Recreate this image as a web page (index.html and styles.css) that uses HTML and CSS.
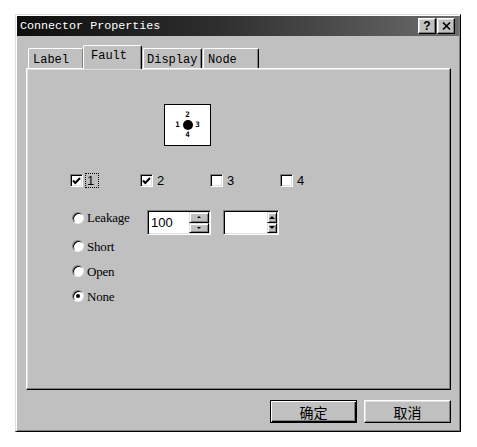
FILE: index.html
```html
<!DOCTYPE html>
<html>
<head>
<meta charset="utf-8">
<title>Connector Properties</title>
<link rel="stylesheet" href="styles.css">
</head>
<body>
<div class="window">
  <div class="titlebar">
    <span class="title">Connector Properties</span>
    <div class="tbtns">
      <span class="tbtn help">?</span>
      <span class="tbtn close"><svg width="9" height="8" viewBox="0 0 9 8"><path d="M1 0.5 L8 7.5 M8 0.5 L1 7.5" stroke="#000" stroke-width="1.6" fill="none"/></svg></span>
    </div>
  </div>
  <div class="body">
    <div class="tabs">
      <div class="tab t-label">Label</div>
      <div class="tab sel t-fault">Fault</div>
      <div class="tab t-display">Display</div>
      <div class="tab t-node">Node</div>
    </div>
    <div class="panel">
      <div class="diagram">
        <span></span><span class="n">2</span><span></span>
        <span class="n">1</span><span class="dot"></span><span class="n">3</span>
        <span></span><span class="n">4</span><span></span>
      </div>
      <div class="checks">
        <div class="chk"><span class="box"><svg width="9" height="8" viewBox="0 0 9 8"><path d="M1 3.5 L3.3 6 L8 1" stroke="#000" stroke-width="2" fill="none"/></svg></span><span class="clabel focus">1</span></div>
        <div class="chk"><span class="box"><svg width="9" height="8" viewBox="0 0 9 8"><path d="M1 3.5 L3.3 6 L8 1" stroke="#000" stroke-width="2" fill="none"/></svg></span><span class="clabel">2</span></div>
        <div class="chk"><span class="box"></span><span class="clabel">3</span></div>
        <div class="chk"><span class="box"></span><span class="clabel">4</span></div>
      </div>
      <div class="radios">
        <div class="rrow first">
          <span class="radio"></span><span class="rlabel wide">Leakage</span>
          <div class="spin s1">
            <span class="val">100</span>
            <div class="sbtns">
              <span class="sbtn"><i class="up"></i></span>
              <span class="sbtn"><i class="down"></i></span>
            </div>
          </div>
          <div class="spin s2">
            <span class="val"></span>
            <div class="sbtns">
              <span class="sbtn"><i class="up"></i></span>
              <span class="sbtn"><i class="down"></i></span>
            </div>
          </div>
        </div>
        <div class="rrow"><span class="radio"></span><span class="rlabel">Short</span></div>
        <div class="rrow"><span class="radio"></span><span class="rlabel">Open</span></div>
        <div class="rrow"><span class="radio on"></span><span class="rlabel">None</span></div>
      </div>
    </div>
    <div class="buttons">
      <div class="btn default">确定</div>
      <div class="btn">取消</div>
    </div>
  </div>
</div>
</body>
</html>
```

FILE: styles.css
```css
body {
  margin: 0;
  background: #fff;
}

.window {
  margin: 14px 0 0 15px;
  width: 446px;
  height: 418px;
  box-sizing: border-box;
  background: #c0c0c0;
  border: 1px solid;
  border-color: #dfdfdf #000 #000 #dfdfdf;
  box-shadow: inset 1px 1px #fff, inset -1px -1px #808080;
  padding: 1px;
  display: flex;
  flex-direction: column;
}

.titlebar {
  height: 20px;
  flex: none;
  background: linear-gradient(to right, #0e0e0e 0%, #2e2e2e 45%, #6c6c6c 100%);
  display: flex;
  align-items: center;
  justify-content: space-between;
  padding: 0 4px 0 3px;
}

.title {
  color: #fff;
  font-family: "Liberation Mono", monospace;
  font-size: 11.7px;
  line-height: 14px;
}

.tbtns {
  display: flex;
  gap: 1px;
}

.tbtn {
  width: 18px;
  height: 16px;
  box-sizing: border-box;
  background: #c0c0c0;
  border: 1px solid;
  border-color: #fff #000 #000 #fff;
  box-shadow: inset -1px -1px #808080, inset 1px 1px #dfdfdf;
  display: flex;
  align-items: center;
  justify-content: center;
  font-family: "Liberation Sans", sans-serif;
  font-weight: bold;
  font-size: 12px;
  line-height: 12px;
  color: #000;
}

.body {
  flex: 1;
  display: flex;
  flex-direction: column;
  padding: 9px 8px 7px 9px;
}

.tabs {
  display: flex;
  align-items: flex-end;
  height: 24px;
  margin-bottom: -1px;
  position: relative;
  z-index: 1;
  flex: none;
}

.tab {
  box-sizing: border-box;
  height: 20px;
  margin-bottom: 1px;
  background: #c0c0c0;
  border-top: 1px solid #fff;
  border-left: 1px solid #fff;
  border-right: 1px solid #000;
  border-top-left-radius: 2px;
  border-top-right-radius: 2px;
  box-shadow: inset -1px 0 #808080;
  font-family: "Liberation Mono", monospace;
  font-size: 12px;
  line-height: 16px;
  padding: 3px 0 0 4px;
  color: #000;
}

.t-label { margin-left: 2px; width: 55px; border-right-color: #808080; box-shadow: none; }
.t-fault { width: 59px; }
.t-display { margin-left: 1px; width: 59px; padding-left: 3px; }
.t-node { margin-left: 1px; width: 56px; }

.tab.sel {
  height: 24px;
  margin-bottom: 0;
  padding: 2px 0 0 7px;
}

.panel {
  flex: none;
  height: 322px;
  box-sizing: border-box;
  border: 1px solid;
  border-color: #fff #000 #000 #fff;
  box-shadow: inset -1px -1px #808080, inset 1px 1px #dfdfdf;
  display: flex;
  flex-direction: column;
  align-items: flex-start;
}

.diagram {
  margin: 35px 0 0 137px;
  width: 47px;
  height: 42px;
  box-sizing: border-box;
  border: 1px solid #000;
  background: #fff;
  display: grid;
  grid-template-columns: 6px 10px 6px;
  grid-template-rows: 8px 10px 8px;
  column-gap: 2px;
  row-gap: 1px;
  justify-content: center;
  align-content: center;
  justify-items: center;
  align-items: center;
  font-family: "DejaVu Sans Mono", monospace;
  font-weight: bold;
  font-size: 7.5px;
  line-height: 8px;
  color: #000;
}

.dot {
  width: 10px;
  height: 10px;
  border-radius: 50%;
  background: #000;
}

.checks {
  display: flex;
  margin: 27px 0 0 43px;
}

.chk {
  width: 70px;
  display: flex;
  align-items: center;
}

.box {
  width: 13px;
  height: 13px;
  box-sizing: border-box;
  background: #fff;
  border: 1px solid;
  border-color: #808080 #fff #fff #808080;
  box-shadow: inset 1px 1px #000, inset -1px -1px #dfdfdf;
  display: flex;
  align-items: center;
  justify-content: center;
}

.clabel {
  margin-left: 2px;
  box-sizing: border-box;
  height: 15px;
  padding: 0 1px;
  font-family: "Liberation Sans", sans-serif;
  font-size: 13px;
  line-height: 13px;
  border: 1px solid transparent;
  color: #000;
}

.clabel.focus {
  width: 14px;
  border: 1px dotted #000;
}

.radios {
  margin: 22px 0 0 45px;
  display: flex;
  flex-direction: column;
}

.rrow {
  display: flex;
  align-items: flex-start;
  height: 25px;
  padding-top: 2px;
  box-sizing: border-box;
}

.rrow.first {
  height: 28px;
  padding-top: 0;
}

.rrow.first .radio {
  margin-top: 2px;
}

.rrow.first .rlabel {
  margin-top: 1px;
}

.radio {
  width: 12px;
  height: 12px;
  box-sizing: border-box;
  border-radius: 50%;
  background: #fff;
  border: 1px solid;
  border-color: #808080 #eee #eee #808080;
  box-shadow: inset 1px 1px #000;
  display: flex;
  align-items: center;
  justify-content: center;
  flex: none;
}

.radio.on::after {
  content: "";
  width: 4px;
  height: 4px;
  border-radius: 50%;
  background: #000;
}

.rlabel {
  margin-left: 3px;
  font-family: "Liberation Serif", serif;
  font-size: 13px;
  line-height: 13px;
  color: #000;
  letter-spacing: -0.2px;
}

.rlabel.wide {
  width: 60px;
}

.spin {
  height: 25px;
  box-sizing: border-box;
  background: #fff;
  border: 1px solid;
  border-color: #808080 #fff #fff #808080;
  box-shadow: inset 1px 1px #000, inset -1px -1px #dfdfdf;
  display: flex;
  justify-content: space-between;
  padding: 1px;
}

.s1 { width: 64px; }
.s2 { width: 56px; margin-left: 12px; }

.val {
  font-family: "Liberation Sans", sans-serif;
  font-size: 13px;
  line-height: 13px;
  padding: 4px 0 0 2px;
  color: #000;
}

.sbtns {
  display: flex;
  flex-direction: column;
}

.s1 .sbtns { width: 20px; }
.s2 .sbtns { width: 10px; }

.sbtn {
  flex: 1;
  box-sizing: border-box;
  background: #c0c0c0;
  border: 1px solid;
  border-color: #dfdfdf #000 #000 #dfdfdf;
  box-shadow: inset 1px 1px #fff, inset -1px -1px #808080;
  display: flex;
  align-items: center;
  justify-content: center;
}

.sbtn i {
  width: 0;
  height: 0;
  border-left: 2px solid transparent;
  border-right: 2px solid transparent;
}

.sbtn i.up { border-bottom: 2px solid #000; }
.sbtn i.down { border-top: 2px solid #000; }

.s2 .sbtn i {
  border-left-width: 3px;
  border-right-width: 3px;
}
.s2 .sbtn i.up { border-bottom-width: 3px; }
.s2 .sbtn i.down { border-top-width: 3px; }

.buttons {
  margin-top: 10px;
  display: flex;
  justify-content: flex-end;
  gap: 7px;
}

.btn {
  width: 87px;
  height: 23px;
  box-sizing: border-box;
  background: #c0c0c0;
  border: 1px solid;
  border-color: #fff #000 #000 #fff;
  box-shadow: inset -1px -1px #808080, inset 1px 1px #dfdfdf;
  display: flex;
  align-items: center;
  justify-content: center;
  font-family: "Noto Sans CJK SC", sans-serif;
  font-size: 14px;
  line-height: 16px;
  color: #000;
}

.btn.default {
  border-color: #000;
  box-shadow: inset 1px 1px #fff, inset -1px -1px #000, inset -2px -2px #808080;
}
```
